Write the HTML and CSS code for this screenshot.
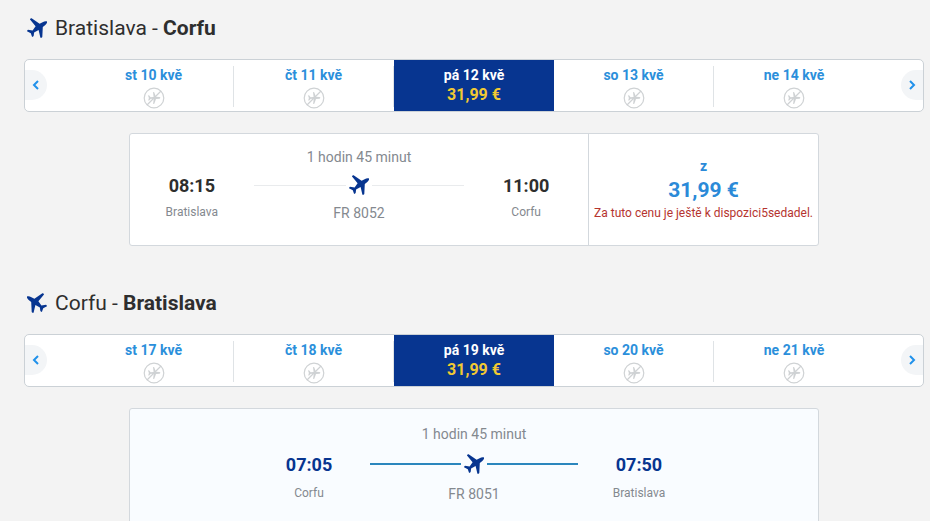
FILE: index.html
```html
<!DOCTYPE html>
<html lang="cs">
<head>
  <meta charset="UTF-8" />
  <meta name="viewport" content="width=device-width, initial-scale=1" />
  <title>Bratislava - Corfu</title>
  <link rel="stylesheet" href="styles.css">
</head>
<body>
  <svg class="sprite" aria-hidden="true">
    <symbol id="plane" viewBox="0 0 20 20">
      <path d="M20 3.6C19.2 2.8 17 3.4 15.6 4.2L12.6 5.7 4.6.2C3.8.1 3 .8 3 1.6L8.6 8.2 5.6 12.6 1 11.8C.3 12.3 0 12.8 0 13.3L3.8 15.2 5.1 19C5.8 19 6.4 18.4 6.7 17.8L7.1 14.6 11.6 12 13.4 19.8C14.2 20 14.9 19.6 15.3 18.9L15.8 9 18.3 7C19.7 5.8 20.4 4.4 20 3.6Z"/>
    </symbol>
    <symbol id="no-flight" viewBox="0 0 22 22">
      <circle cx="11" cy="11" r="9.8" fill="none" stroke="currentColor" stroke-width="1.2"/>
      <path d="M4 18L18 4" stroke="currentColor" stroke-width="1.2"/>
      <path fill="currentColor" d="M17.5 10.8L16.6 10 12.9 9.8 11.2 5.2 10 5 10.6 9.9 7.6 10.2 6 8.3 5 8.4 5.9 11 5.2 13.6 6.2 13.6 7.8 11.8 10.7 12.1 10.1 17 11.3 16.8 13 12 16.6 11.8Z"/>
    </symbol>
    <symbol id="prev" viewBox="0 0 8 10">
      <path d="M6 1L2 5 6 9" fill="none" stroke="currentColor" stroke-width="2"/>
    </symbol>
    <symbol id="next" viewBox="0 0 8 10">
      <path d="M2 1L6 5 2 9" fill="none" stroke="currentColor" stroke-width="2"/>
    </symbol>
  </svg>

  <main>
    <section class="trip">
      <h2><svg class="plane"><use href="#plane"/></svg><span>Bratislava - <strong>Corfu</strong></span></h2>
      <div class="carousel">
        <button class="arrow left" aria-label="Předchozí"><svg><use href="#prev"/></svg></button>
        <div class="days">
          <button class="day">st 10 kvě<svg><use href="#no-flight"/></svg></button>
          <button class="day">čt 11 kvě<svg><use href="#no-flight"/></svg></button>
          <button class="day active">pá 12 kvě<span class="fare">31,99 €</span></button>
          <button class="day">so 13 kvě<svg><use href="#no-flight"/></svg></button>
          <button class="day">ne 14 kvě<svg><use href="#no-flight"/></svg></button>
        </div>
        <button class="arrow right" aria-label="Další"><svg><use href="#next"/></svg></button>
      </div>
      <div class="card">
        <div class="flight">
          <div class="stop"><b>08:15</b><span>Bratislava</span></div>
          <div class="route">
            <span>1 hodin 45 minut</span>
            <div class="line"><svg class="plane"><use href="#plane"/></svg></div>
            <span>FR 8052</span>
          </div>
          <div class="stop"><b>11:00</b><span>Corfu</span></div>
        </div>
        <div class="price">
          <span class="from">z</span>
          <strong>31,99 €</strong>
          <span class="seats">Za tuto cenu je ještě k dispozici5sedadel.</span>
        </div>
      </div>
    </section>

    <section class="trip">
      <h2><svg class="plane back"><use href="#plane"/></svg><span>Corfu - <strong>Bratislava</strong></span></h2>
      <div class="carousel">
        <button class="arrow left" aria-label="Předchozí"><svg><use href="#prev"/></svg></button>
        <div class="days">
          <button class="day">st 17 kvě<svg><use href="#no-flight"/></svg></button>
          <button class="day">čt 18 kvě<svg><use href="#no-flight"/></svg></button>
          <button class="day active">pá 19 kvě<span class="fare">31,99 €</span></button>
          <button class="day">so 20 kvě<svg><use href="#no-flight"/></svg></button>
          <button class="day">ne 21 kvě<svg><use href="#no-flight"/></svg></button>
        </div>
        <button class="arrow right" aria-label="Další"><svg><use href="#next"/></svg></button>
      </div>
      <div class="card selected">
        <div class="flight">
          <div class="stop"><b>07:05</b><span>Corfu</span></div>
          <div class="route">
            <span>1 hodin 45 minut</span>
            <div class="line"><svg class="plane"><use href="#plane"/></svg></div>
            <span>FR 8051</span>
          </div>
          <div class="stop"><b>07:50</b><span>Bratislava</span></div>
        </div>
      </div>
    </section>
  </main>
</body>
</html>
```
FILE: styles.css
```css
* {
  box-sizing: border-box;
}
body {
  font-family: Roboto, "Liberation Sans", sans-serif;
  background: #f3f3f3;
  color: #2e2e2e;
  margin: 0;
}
main {
  padding: 14px 6px 0 24px;
}
button {
  font-family: inherit;
  border: none;
  padding: 0;
  cursor: pointer;
}
.sprite {
  display: none;
}
.trip + .trip {
  margin-top: 43px;
}
h2 {
  display: flex;
  align-items: center;
  gap: 8px;
  margin: 0 0 17px;
  padding-left: 3px;
  font-size: 21px;
  line-height: 28px;
  font-weight: 400;
}
h2 strong {
  font-weight: 700;
}
.plane {
  width: 20px;
  height: 20px;
  fill: #073590;
  flex: none;
}
.back {
  transform: scaleX(-1);
}
.carousel {
  display: flex;
  align-items: flex-start;
  justify-content: space-between;
  height: 53px;
  background: white;
  border: 1px solid #cbd1d6;
  border-radius: 5px;
  overflow: hidden;
}
.arrow {
  display: flex;
  align-items: center;
  justify-content: center;
  width: 22px;
  height: 30px;
  margin-top: 10px;
  background: #f3f5f7;
  color: #2091eb;
}
.arrow.left {
  border-radius: 0 15px 15px 0;
}
.arrow.right {
  border-radius: 15px 0 0 15px;
}
.arrow svg {
  width: 8px;
  height: 10px;
}
.days {
  display: grid;
  grid-template-columns: repeat(5, 1fr);
  flex: 1;
  align-self: stretch;
  margin: 0 27px;
}
.day {
  display: flex;
  flex-direction: column;
  align-items: center;
  justify-content: flex-start;
  align-self: start;
  height: 41px;
  margin-top: 6px;
  gap: 3px;
  background: none;
  color: #2b8fdb;
  font-size: 14px;
  line-height: 18px;
  font-weight: 700;
  border-right: 1px solid #dfe3e6;
}
.day:last-child {
  border-right: none;
}
.day svg {
  flex: none;
  width: 22px;
  height: 22px;
  color: #cfd2d4;
}
.day.active {
  align-self: stretch;
  height: auto;
  margin: 0;
  gap: 2px;
  padding-top: 6px;
  background: #073590;
  color: white;
  border: none;
}
.fare {
  color: #f1c933;
  font-size: 16px;
}
.card {
  display: flex;
  justify-content: center;
  max-width: 690px;
  height: 113px;
  margin: 21px auto 0;
  background: white;
  border: 1px solid #d3d8dd;
  border-radius: 3px;
}
.flight {
  display: flex;
  flex: 2;
  padding-top: 13px;
}
.stop {
  flex: 27;
  display: flex;
  flex-direction: column;
  align-items: center;
  padding-top: 28px;
}
.stop b {
  font-size: 18px;
  line-height: 22px;
  font-weight: 700;
}
.stop span {
  margin-top: 6px;
  font-size: 12px;
  line-height: 18px;
  color: #84898f;
}
.route {
  flex: 46;
  display: flex;
  flex-direction: column;
  align-items: center;
  font-size: 14px;
  line-height: 20px;
  color: #84898f;
}
.line {
  display: flex;
  align-items: center;
  gap: 3px;
  align-self: stretch;
  margin: 8px 0;
}
.line::before,
.line::after {
  content: "";
  flex: 1;
  height: 1px;
  background: #e9ebed;
}
.price {
  flex: 1;
  display: flex;
  flex-direction: column;
  align-items: center;
  padding-top: 22px;
  border-left: 1px solid #d3d8dd;
  color: #2b8ad8;
  white-space: nowrap;
}
.from {
  font-size: 14px;
  line-height: 20px;
  font-weight: 700;
}
.price strong {
  font-size: 21px;
  line-height: 28px;
}
.seats {
  font-size: 12px;
  line-height: 18px;
  color: #b5342f;
}
.selected {
  background: #f9fcff;
  height: 120px;
}
.selected .flight {
  flex: 0 1 452px;
  padding-top: 15px;
}
.selected .stop {
  padding-top: 30px;
}
.selected .stop b {
  color: #073590;
}
.selected .stop span {
  margin-top: 8px;
}
.selected .line {
  margin: 10px 0;
}
.selected .line::before,
.selected .line::after {
  height: 2px;
  background: #2b86bd;
}
```
